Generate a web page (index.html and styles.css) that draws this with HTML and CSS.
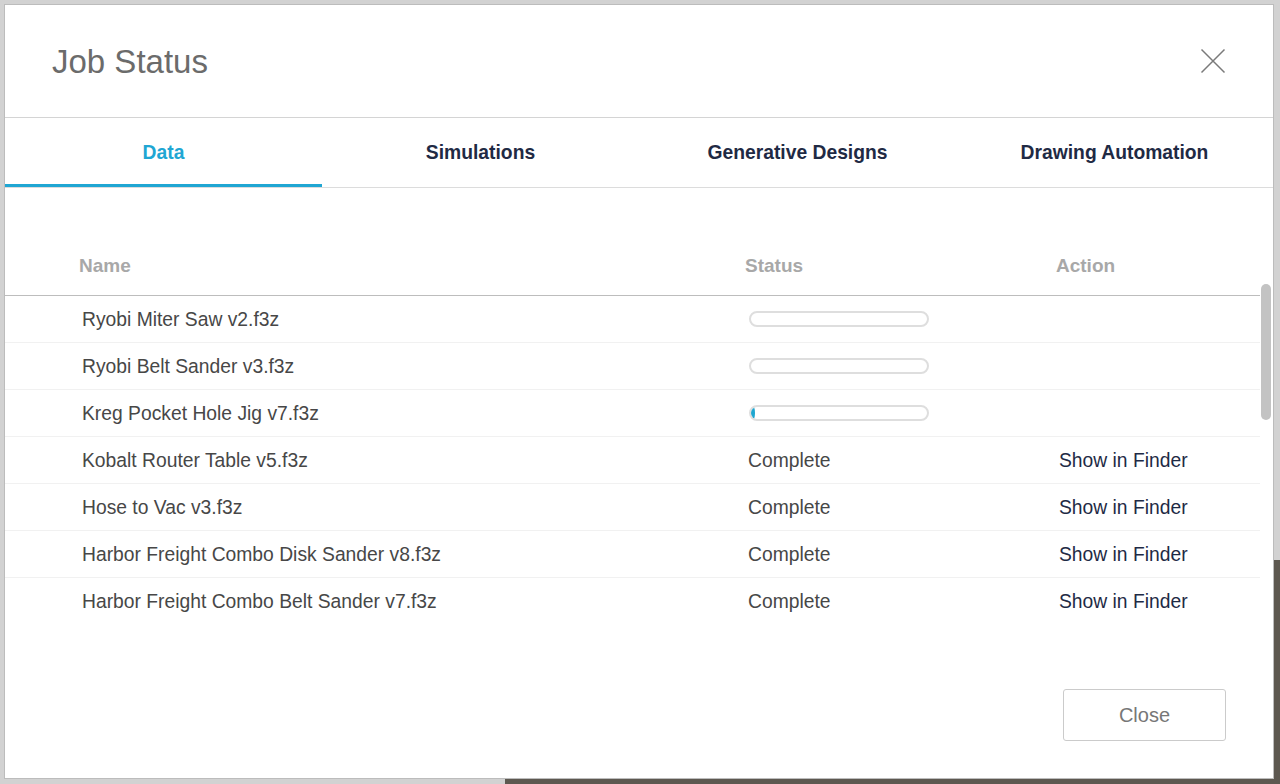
FILE: index.html
```html
<!DOCTYPE html>
<html lang="en">
<head>
<meta charset="utf-8">
<title>Job Status</title>
<link rel="stylesheet" href="styles.css">
</head>
<body>
<div class="desktop-dark"></div>
<div class="dialog">
  <header class="dialog-header">
    <h1 class="dialog-title">Job Status</h1>
    <button class="close-x" aria-label="Close">
      <svg width="26" height="26" viewBox="0 0 26 26"><path d="M1.5 1.5 L24.5 24.5 M24.5 1.5 L1.5 24.5" stroke="#7a7a7a" stroke-width="1.5" fill="none"/></svg>
    </button>
  </header>
  <nav class="tabs">
    <div class="tab active">Data</div>
    <div class="tab">Simulations</div>
    <div class="tab">Generative Designs</div>
    <div class="tab">Drawing Automation</div>
  </nav>
  <section class="body">
    <div class="table">
      <div class="thead">
        <div>Name</div><div>Status</div><div>Action</div>
      </div>
      <div class="row"><div>Ryobi Miter Saw v2.f3z</div><div><div class="progress"></div></div><div></div></div>
      <div class="row"><div>Ryobi Belt Sander v3.f3z</div><div><div class="progress"></div></div><div></div></div>
      <div class="row"><div>Kreg Pocket Hole Jig v7.f3z</div><div><div class="progress"><div class="fill"></div></div></div><div></div></div>
      <div class="row"><div>Kobalt Router Table v5.f3z</div><div>Complete</div><div class="action">Show in Finder</div></div>
      <div class="row"><div>Hose to Vac v3.f3z</div><div>Complete</div><div class="action">Show in Finder</div></div>
      <div class="row"><div>Harbor Freight Combo Disk Sander v8.f3z</div><div>Complete</div><div class="action">Show in Finder</div></div>
      <div class="row last"><div>Harbor Freight Combo Belt Sander v7.f3z</div><div>Complete</div><div class="action">Show in Finder</div></div>
    </div>
    <div class="scroll-track"><div class="scroll-thumb"></div></div>
  </section>
  <footer class="dialog-footer">
    <button class="btn-close">Close</button>
  </footer>
</div>
</body>
</html>
```
FILE: styles.css
```css
* { box-sizing: border-box; }
html, body { margin: 0; padding: 0; }
body {
  width: 1280px;
  height: 784px;
  overflow: hidden;
  background: #d2d2d2;
  font-family: "Liberation Sans", Arial, sans-serif;
  position: relative;
}
.desktop-dark {
  position: absolute;
  left: 505px;
  top: 560px;
  right: 0;
  bottom: 0;
  background: #5d5850;
}
.dialog {
  position: relative;
  margin: 5px 0 0 5px;
  width: 1268px;
  height: 773px;
  background: #fff;
  box-shadow: 0 0 0 1px #bcbcbc;
  display: flex;
  flex-direction: column;
}
.dialog-header {
  height: 113px;
  border-bottom: 1px solid #d4d4d4;
  display: flex;
  align-items: center;
  justify-content: space-between;
  padding: 0 47px 0 47px;
}
.dialog-title {
  margin: 0;
  font-size: 33px;
  font-weight: normal;
  color: #6b6b6b;
  padding-top: 1px;
}
.close-x {
  border: 0;
  background: none;
  padding: 0;
  width: 26px;
  height: 26px;
  display: flex;
}
.tabs {
  display: grid;
  grid-template-columns: repeat(4, 1fr);
  height: 70px;
  border-bottom: 1px solid #dcdcdc;
}
.tab {
  display: flex;
  align-items: center;
  justify-content: center;
  font-size: 19.3px;
  font-weight: bold;
  color: #1f2a44;
}
.tab.active {
  color: #20a6d3;
  box-shadow: inset 0 -3px 0 #20a6d3;
}
.body {
  display: flex;
  padding-top: 48px;
}
.table {
  width: 1255px;
}
.thead, .row {
  display: grid;
  grid-template-columns: 666px 311px 1fr;
  align-items: center;
}
.thead {
  height: 60px;
  padding-left: 74px;
  border-bottom: 1px solid #bdbdbd;
  font-size: 19px;
  font-weight: bold;
  color: #a8a8a8;
  padding-top: 1px;
}
.row {
  height: 47px;
  padding-left: 77px;
  padding-top: 2px;
  border-bottom: 1px solid #f1f1f1;
  font-size: 19.3px;
  color: #474747;
}
.row.last { border-bottom-color: transparent; }
.row .action { color: #1e2a45; }
.progress {
  width: 180px;
  height: 16px;
  margin-left: 1px;
  margin-top: -2px;
  border: 2px solid #dedede;
  border-radius: 8px;
  position: relative;
  overflow: hidden;
}
.progress .fill {
  position: absolute;
  left: -2px;
  top: -2px;
  width: 6px;
  height: 16px;
  border-radius: 50%;
  background: #1ea6d0;
}
.scroll-track {
  width: 13px;
  padding-left: 1px;
}
.scroll-thumb {
  margin-top: 48px;
  width: 10px;
  height: 136px;
  border-radius: 5px;
  background: #c3c3c3;
}
.dialog-footer {
  margin-top: auto;
  display: flex;
  justify-content: flex-end;
  padding: 0 47px 37px 0;
}
.btn-close {
  width: 163px;
  height: 52px;
  border: 1px solid #cbcbcb;
  border-radius: 3px;
  background: #fff;
  font-family: "Liberation Sans", Arial, sans-serif;
  font-size: 20px;
  color: #777;
}
```
